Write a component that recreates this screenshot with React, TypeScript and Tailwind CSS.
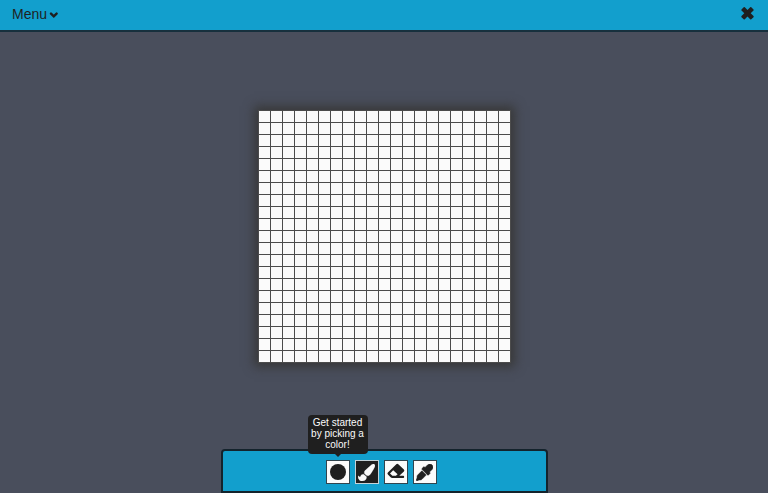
import React, { useState } from 'react';
import { FaEyeDropper, FaPaintBrush } from 'react-icons/fa';

const SIZE = 21;
const CELLS = Array.from({ length: SIZE * SIZE }, (_, i) => i);

function ChevronIcon() {
  return (
    <svg viewBox="0 0 9 9" width="9" height="9" fill="none" stroke="currentColor" strokeWidth="2.4" strokeLinejoin="miter" strokeLinecap="round" aria-hidden="true">
      <path d="M2 3.6 4.8 6.3 7.6 3.6" />
    </svg>
  );
}

function CloseIcon() {
  return (
    <svg viewBox="0 0 16 16" width="16" height="16" fill="currentColor" aria-hidden="true">
      <path d="M1.5 4.5Q1 4 1.5 3.4L3.7 1.3Q4.2.8 4.8 1.3L7.5 4.1 10.2 1.3Q10.8.8 11.3 1.3L13.5 3.4Q14 4 13.5 4.5L10.7 7.3 13.5 10.1Q14 10.7 13.5 11.2L11.3 13.3Q10.8 13.8 10.2 13.3L7.5 10.6 4.8 13.3Q4.2 13.8 3.7 13.3L1.5 11.2Q1 10.7 1.5 10.1L4.3 7.3Z" />
    </svg>
  );
}

function EraserIcon() {
  return (
    <svg viewBox="0 0 22 22" width="22" height="22" fill="currentColor" aria-hidden="true">
      <path
        fillRule="evenodd"
        d="M11.3 3.2Q12.3 2.3 13.3 3.2L18.9 8.5Q19.8 9.5 18.9 10.5L14.3 14.8H18.2Q19.2 14.8 19.2 15.9 19.2 17 18.2 17H7.2Q6.3 17 5.6 16.3L2.9 13.5Q1.9 12.5 2.9 11.5ZM8.2 9.3 5 12.5 7.4 14.8H10.9L12.6 13.3Z"
      />
    </svg>
  );
}

const TOOLS = [
  {
    id: 'color',
    label: 'Color',
    icon: (
      <svg viewBox="0 0 16 16" width="16" height="16" fill="currentColor" aria-hidden="true">
        <circle cx="8" cy="8" r="8" />
      </svg>
    ),
  },
  { id: 'brush', label: 'Brush', icon: <FaPaintBrush size={17} stroke="currentColor" strokeWidth={10} /> },
  { id: 'eraser', label: 'Eraser', icon: <EraserIcon /> },
  { id: 'picker', label: 'Color picker', icon: <FaEyeDropper size={17} stroke="currentColor" strokeWidth={16} /> },
];

export default function App() {
  const [tool, setTool] = useState('brush');

  return (
    <div className="flex h-screen flex-col bg-[#494e5c] font-['Liberation_Sans',Arial,sans-serif] text-[#1f1f1f]">
      <header className="flex h-8 shrink-0 items-center justify-between border-b-2 border-[#17303d] bg-[#129fcd] px-3 pb-0.5">
        <button type="button" className="flex items-center gap-0.5 text-sm leading-4">
          Menu
          <ChevronIcon />
        </button>
        <button type="button" aria-label="Close">
          <CloseIcon />
        </button>
      </header>

      <main className="flex flex-1 items-center justify-center pb-2">
        <div className="grid grid-cols-[repeat(21,12px)] border-t border-l border-[#4c4c4c] bg-[#fbfbfb] shadow-[0_0_10px_4px_#383838]">
          {CELLS.map((i) => (
            <div key={i} className="h-3 border-r border-b border-[#4c4c4c]" />
          ))}
        </div>
      </main>

      <footer className="mx-auto flex h-11 w-[327px] max-w-full shrink-0 items-center justify-center gap-[5px] rounded-t border-2 border-[#14232c] bg-[#129fcd] pt-0.5 pr-1.5">
        {TOOLS.map(({ id, label, icon }) => (
          <div key={id} className="relative">
            <button
              type="button"
              aria-label={label}
              aria-pressed={tool === id}
              onClick={() => setTool(id)}
              className={
                tool === id
                  ? 'flex size-6 items-center justify-center border border-[#c4d3d9] bg-[#1f1f1f] text-[#fbfbfb]'
                  : 'flex size-6 items-center justify-center border border-[#30444e] bg-[#fbfbfb] text-[#1f1f1f]'
              }
            >
              {icon}
            </button>
            {id === 'color' && (
              <div
                role="tooltip"
                className="absolute bottom-full left-1/2 mb-1.5 w-15 -translate-x-1/2 rounded bg-[#1f1f1f] pt-0.5 pb-1 text-center text-[10px] leading-[11px] text-[#fbfbfb]"
              >
                Get started by picking a color!
                <span className="absolute top-full left-1/2 -translate-x-1/2 border-x-3 border-t-3 border-x-transparent border-t-[#1f1f1f]" />
              </div>
            )}
          </div>
        ))}
      </footer>
    </div>
  );
}
